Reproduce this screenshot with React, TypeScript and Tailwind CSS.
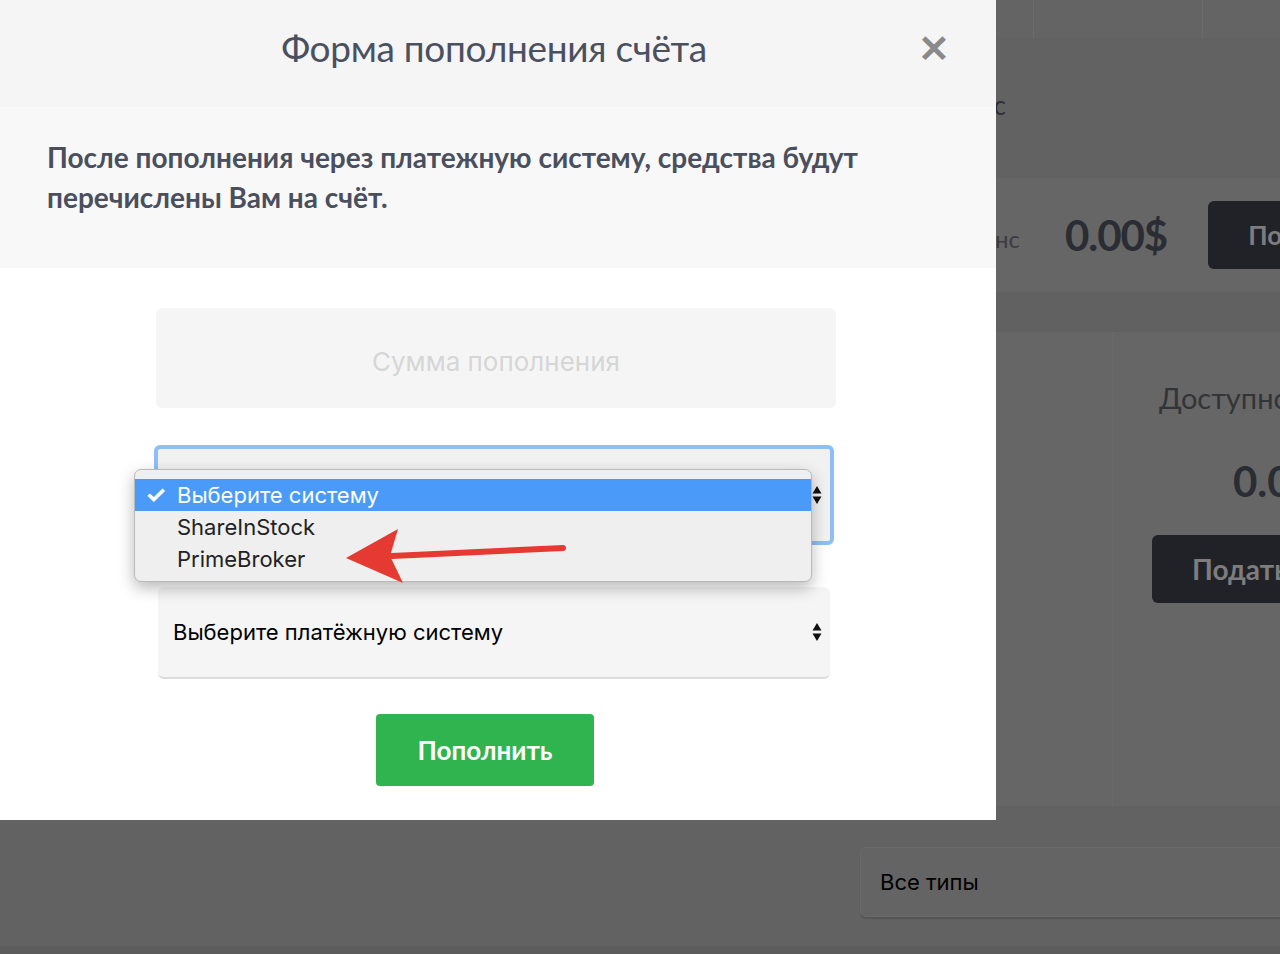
import React from "react";

const lato = { fontFamily: "Lato, 'Open Sans', sans-serif" };
const sys = { fontFamily: "Inter, 'Noto Sans', sans-serif" };

function UpDown({ className = "" }: { className?: string }) {
  return (
    <svg width="10" height="20" viewBox="0 0 10 20" className={className}>
      <path d="M5 1 L9.5 8.5 L0.5 8.5 Z" fill="#111" />
      <path d="M5 19 L9.5 11.5 L0.5 11.5 Z" fill="#111" />
    </svg>
  );
}

function BackgroundPage() {
  return (
    <div className="flex flex-col h-full text-[#2a2d33]" style={lato}>
      <div className="h-[38px] bg-[#646464] flex shrink-0">
        <div className="w-[1033px] shrink-0" />
        <div className="w-[170px] shrink-0 border-l border-r border-[#6b6b6b]" />
      </div>
      <div className="h-[140px] bg-[#626262] shrink-0 flex">
        <div className="w-[1006px] shrink-0 text-right text-[26px] text-[#2e3036] pt-[54px] leading-none">Баланс</div>
      </div>
      <div className="h-[114px] bg-[#666666] shrink-0 flex items-center whitespace-nowrap">
        <div className="w-[1020px] shrink-0 text-right text-[24px] text-[#3a3c42] pt-[8px]">Баланс</div>
        <div className="shrink-0 ml-[45px] text-[42px] font-bold tracking-tight">0.00$</div>
        <div className="shrink-0 ml-[41px] h-[68px] w-[200px] rounded-md bg-[#202228] text-[#7d7d7d] text-[26px] font-bold flex items-center pl-[40px]">
          Пополнить
        </div>
      </div>
      <div className="h-[40px] bg-[#616161] shrink-0" />
      <div className="h-[474px] bg-[#666666] shrink-0 flex">
        <div className="w-[1113px] shrink-0 border-r border-[#6a6a6a]" />
        <div className="shrink-0 w-[400px] flex flex-col items-start whitespace-nowrap">
          <div className="mt-[44px] ml-[46px] text-[29px] text-[#333438]">Доступно</div>
          <div className="mt-[30px] ml-[120px] text-[42px] font-bold">0.00$</div>
          <div className="mt-[22px] ml-[39px] h-[68px] w-[200px] rounded-md bg-[#202228] text-[#7d7d7d] text-[28px] font-bold flex items-center pl-[40px]">
            Подать
          </div>
        </div>
      </div>
      <div className="flex-1 bg-[#626262] flex flex-col">
        <div className="mt-[41px] ml-[860px] h-[70px] w-[440px] flex-none rounded-md border border-[#6a6a6a] bg-[#646464] shadow-[0_2px_1px_rgba(0,0,0,0.12)] flex items-center pl-[19px] text-[22px] text-black" style={sys}>
          Все типы
        </div>
        <div className="mt-auto h-[8px] bg-[#5c5c5c]" />
      </div>
    </div>
  );
}

function Modal() {
  return (
    <div className="absolute left-0 top-0 w-[996px] h-[820px] bg-white flex flex-col" style={lato}>
      <div className="h-[107px] bg-[#f5f5f5] relative flex items-center justify-center">
        <h2 className="text-[37px] text-[#4b505f] font-normal pb-[12px] pr-[8px] tracking-[-0.3px]">Форма пополнения счёта</h2>
        <span className="absolute left-[918px] top-[28px] text-[38px] font-bold text-[#8a8a8a] leading-none">✕</span>
      </div>
      <div className="h-[161px] bg-[#f8f8f8] px-[47px] pt-[30px]">
        <p className="text-[28px] font-bold leading-[40px] text-[#4a4f5e] w-[900px]">
          После пополнения через платежную систему, средства будут<br />перечислены Вам на счёт.
        </p>
      </div>
      <div className="flex-1 flex flex-col" style={sys}>
        <div className="mt-[40px] ml-[156px] w-[680px] h-[100px] rounded-md bg-[#f5f5f5] flex items-center justify-center pt-[6px] text-[26px] text-[#d6d6d6]">
          Сумма пополнения
        </div>
        <div className="mt-[37px] ml-[154px] w-[680px] h-[100px] rounded-[6px] border-[4px] border-[#8fbdf6] bg-[#f1f1f1] flex items-center justify-end pr-[8px]">
          <UpDown />
        </div>
        <div className="mt-[42px] ml-[158px] w-[672px] h-[92px] rounded-md bg-[#f5f5f5] border-b-2 border-[#dcdcdc] flex items-center justify-between pl-[15px] pr-[8px] text-[22px] text-black">
          <span>Выберите платёжную систему</span>
          <UpDown />
        </div>
        <div className="mt-[35px] self-center ml-[-26px] w-[218px] h-[72px] rounded-[4px] bg-[#2fb44f] flex items-center justify-center text-white text-[26px] font-bold" style={lato}>
          Пополнить
        </div>
      </div>
    </div>
  );
}

function Dropdown() {
  return (
    <div
      className="absolute left-[134px] top-[469px] w-[678px] h-[113px] rounded-[7px] border border-[#b9b9b9] bg-[#efefef] shadow-[0_6px_16px_rgba(0,0,0,0.28)] pt-[9px] text-[22px] text-[#222]"
      style={sys}
    >
      <div className="h-[32px] bg-[#4a9bf9] text-white flex items-center">
        <span className="w-[42px] pl-[10px] text-[24px] font-bold leading-none">✓</span>
        <span>Выберите систему</span>
      </div>
      <div className="h-[32px] flex items-center pl-[42px]">ShareInStock</div>
      <div className="h-[32px] flex items-center pl-[42px]">PrimeBroker</div>
    </div>
  );
}

function RedArrow() {
  return (
    <svg className="absolute left-0 top-0 pointer-events-none" width="1280" height="954">
      <path d="M563 548 L392 556" stroke="#e53a31" strokeWidth="6" strokeLinecap="round" />
      <path d="M346 558 L398 529 L390 556 L403 583 Z" fill="#e53a31" />
    </svg>
  );
}

export default function App() {
  return (
    <div className="relative w-[1280px] h-[954px] overflow-hidden bg-[#626262]">
      <BackgroundPage />
      <Modal />
      <Dropdown />
      <RedArrow />
    </div>
  );
}
